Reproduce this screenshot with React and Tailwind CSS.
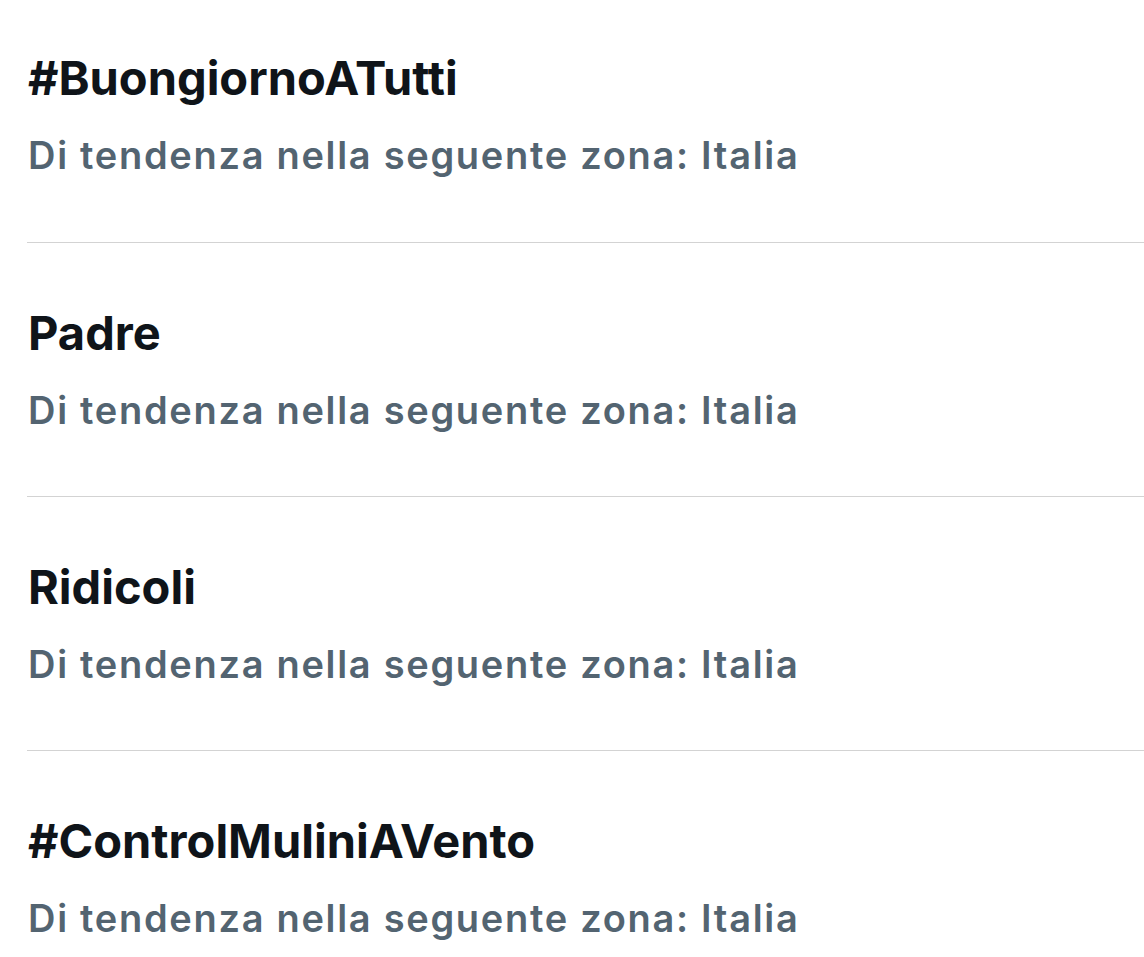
const trends = [
  "#BuongiornoATutti",
  "Padre",
  "Ridicoli",
  "#ControlMuliniAVento",
];

export default function App() {
  return (
    <div className="w-[1144px] h-[957px] overflow-hidden bg-white pl-[27px] font-['Inter',sans-serif]">
      {trends.map((name) => (
        <div
          key={name}
          className="h-[254px] first:h-[243px] pt-[61px] first:pt-[49px] border-b border-[#d3d3d3] pl-px"
        >
          <p className="text-[47px] leading-[57px] font-bold text-[#0f1419]">
            {name}
          </p>
          <p className="mt-[26px] text-[38px] leading-[46px] font-semibold text-[#536471] tracking-[1.7px]">
            Di tendenza nella seguente zona: Italia
          </p>
        </div>
      ))}
    </div>
  );
}
